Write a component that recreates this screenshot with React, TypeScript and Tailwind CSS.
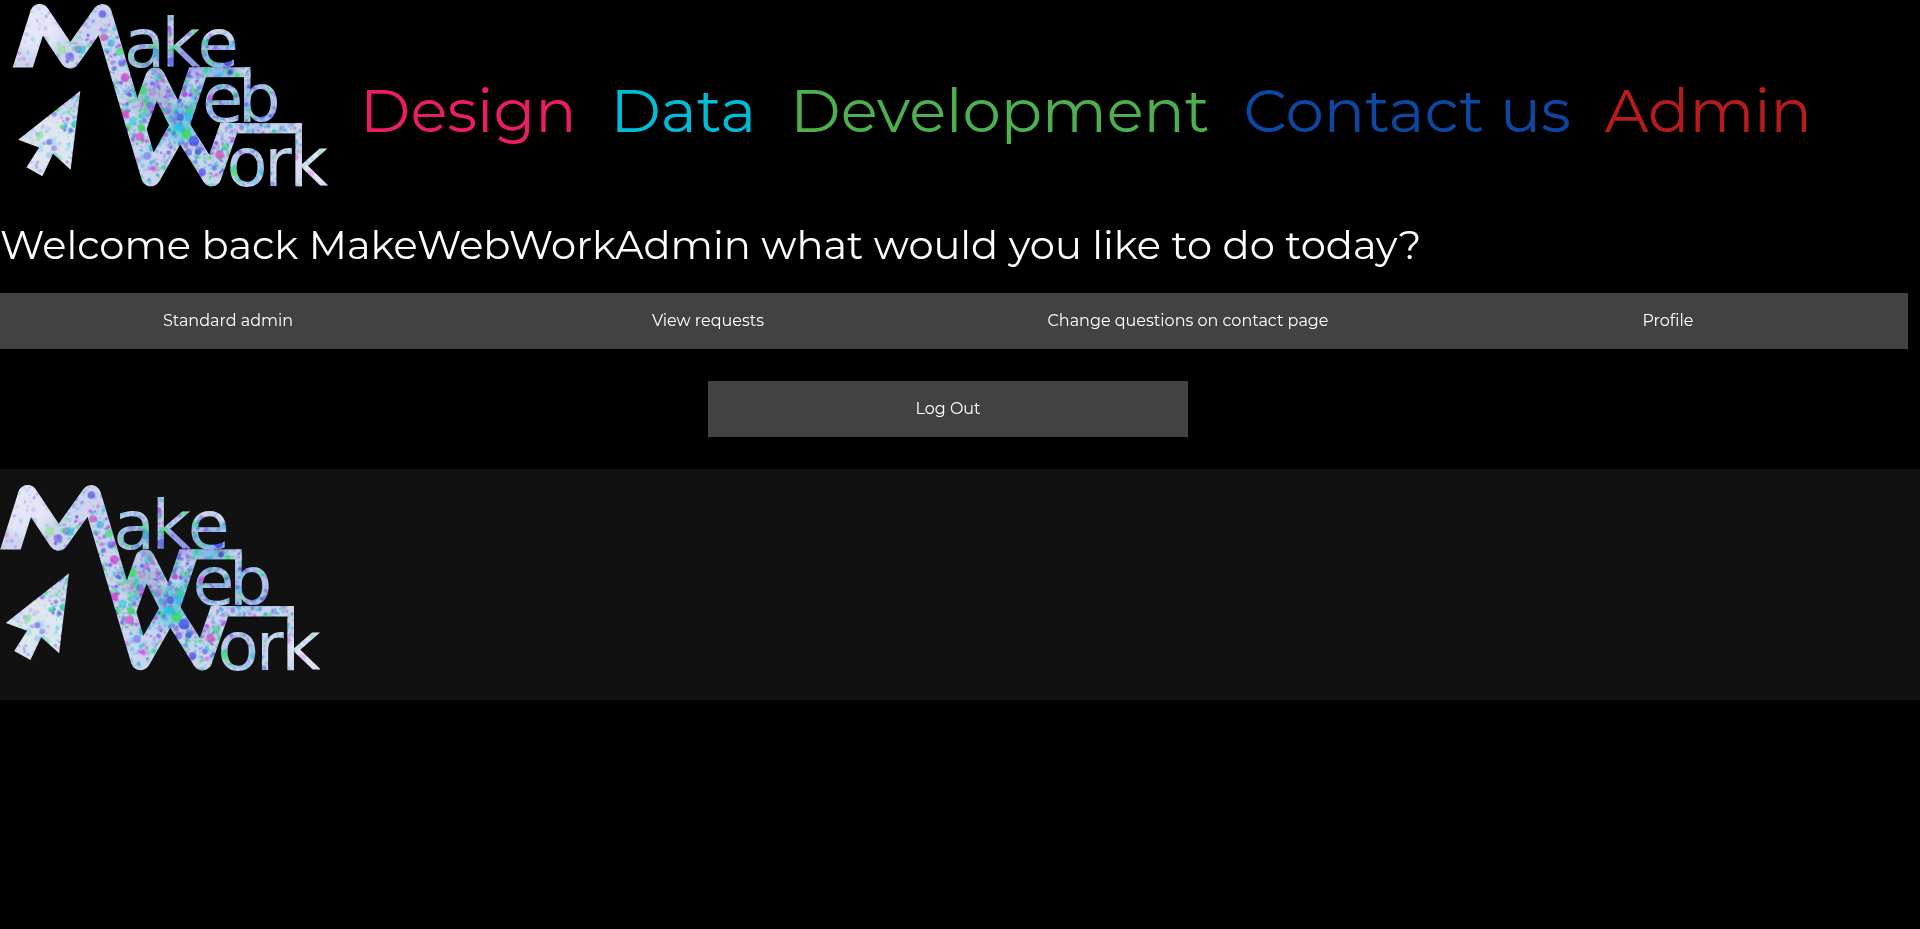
import { useId } from "react";

type Dot = { x: number; y: number; r: number; color: string; opacity: number };

const dotColors = ["#4646f0", "#32e664", "#dc3cdc", "#28c8e6", "#5a64e6", "#8c50dc", "#28b4e6", "#3cdc78"];

function makeDots(): Dot[] {
  let seed = 20177;
  const next = () => {
    seed = (seed * 16807) % 2147483647;
    return seed / 2147483647;
  };
  const dots: Dot[] = [];
  for (let i = 0; i < 9000; i++) {
    const x = 30 + next() * 960;
    const y = 10 + next() * 555;
    const distance = Math.hypot((x - 550) / 480, (y - 320) / 420);
    const keep = next();
    const size = next();
    const color = dotColors[Math.floor(next() * dotColors.length)];
    const strength = next();
    if (keep < Math.max(0.18, 1.05 - distance * 0.8)) {
      const fade = distance > 0.8 ? 0.5 : 1;
      dots.push({
        x: Math.round(x),
        y: Math.round(y),
        r: size > 0.97 ? 11 : Math.round(2 + size * size * 6),
        color,
        opacity: Math.round((0.15 + strength * 0.6) * fade * 100) / 100,
      });
    }
  }
  return dots;
}

const dots = makeDots();

const patches = [
  { x: 545, y: 370, r: 60, color: "#3cc8d2", opacity: 0.6 },
  { x: 460, y: 300, r: 60, color: "#a0aad2", opacity: 0.6 },
  { x: 660, y: 190, r: 60, color: "#50a0dc", opacity: 0.5 },
  { x: 560, y: 180, r: 45, color: "#5a5ae6", opacity: 0.5 },
  { x: 430, y: 160, r: 60, color: "#82aad7", opacity: 0.5 },
  { x: 640, y: 300, r: 60, color: "#8ca0dc", opacity: 0.5 },
  { x: 770, y: 310, r: 70, color: "#8cafe6", opacity: 0.5 },
  { x: 740, y: 500, r: 60, color: "#96b9e6", opacity: 0.4 },
  { x: 110, y: 80, r: 80, color: "#ebebfa", opacity: 0.8 },
  { x: 170, y: 440, r: 110, color: "#e1ebf0", opacity: 0.8 },
  { x: 950, y: 500, r: 60, color: "#ebebfa", opacity: 0.7 },
];

const spots = [
  { x: 308, y: 42, r: 11, color: "#5a50e6" },
  { x: 313, y: 112, r: 11, color: "#d250c8" },
  { x: 334, y: 130, r: 11, color: "#46b4e6" },
  { x: 361, y: 155, r: 12, color: "#46dc78" },
  { x: 376, y: 233, r: 13, color: "#c83cc8" },
  { x: 185, y: 149, r: 12, color: "#96e696" },
  { x: 210, y: 170, r: 13, color: "#7864e6" },
  { x: 377, y: 343, r: 11, color: "#d23ccd" },
  { x: 421, y: 411, r: 13, color: "#dc46d2" },
  { x: 425, y: 385, r: 11, color: "#32dc50" },
  { x: 430, y: 272, r: 13, color: "#3cdc64" },
  { x: 400, y: 364, r: 12, color: "#46c8e6" },
  { x: 443, y: 468, r: 12, color: "#6e82eb" },
  { x: 570, y: 330, r: 12, color: "#32c896" },
  { x: 542, y: 352, r: 11, color: "#5050dc" },
  { x: 540, y: 384, r: 13, color: "#1ec8e6" },
  { x: 560, y: 402, r: 15, color: "#32dc5a" },
  { x: 583, y: 424, r: 16, color: "#4646f0" },
  { x: 595, y: 458, r: 9, color: "#2864c8" },
  { x: 608, y: 517, r: 11, color: "#5a46eb" },
  { x: 660, y: 465, r: 13, color: "#c850be" },
  { x: 163, y: 343, r: 8, color: "#7882eb" },
  { x: 122, y: 406, r: 9, color: "#82eb82" },
  { x: 148, y: 427, r: 9, color: "#786ee6" },
  { x: 163, y: 445, r: 9, color: "#8c8ceb" },
  { x: 525, y: 145, r: 10, color: "#46dc6e" },
  { x: 516, y: 185, r: 14, color: "#5064e6" },
  { x: 468, y: 160, r: 14, color: "#46a0dc" },
  { x: 616, y: 128, r: 10, color: "#28d2a0" },
  { x: 685, y: 186, r: 13, color: "#3c3ce6" },
  { x: 638, y: 292, r: 11, color: "#d25adc" },
  { x: 692, y: 217, r: 8, color: "#2846b4" },
  { x: 705, y: 515, r: 14, color: "#46dc78" },
];

function Logo({ className }: { className: string }) {
  const id = useId();
  const shape = `${id}-shape`;
  const haze = `${id}-haze`;
  const upper = `${id}-upper`;
  const lower = `${id}-lower`;
  const bar = `${id}-bar`;
  return (
    <svg viewBox="38 12 947 550" role="img" aria-label="Make Web Work" className={className}>
      <defs>
        <filter id={haze} x="-50%" y="-50%" width="200%" height="200%">
          <feGaussianBlur stdDeviation="14" />
        </filter>
        <clipPath id={upper}>
          <rect x="0" y="0" width="1000" height="203" />
        </clipPath>
        <clipPath id={lower}>
          <rect x="0" y="202" width="1000" height="370" />
        </clipPath>
        <clipPath id={bar}>
          <rect x="0" y="370" width="1000" height="200" />
        </clipPath>
        <mask id={shape} maskUnits="userSpaceOnUse" x="30" y="0" width="970" height="580">
          <g fill="none" stroke="white" strokeWidth="58" strokeLinejoin="round">
            <polyline points="54,250 120,41 122,43" clipPath={`url(#${upper})`} />
            <polyline points="120,41 211,177 308,41 454,531 541,378 637,531" strokeLinecap="round" />
            <polyline points="410,390 467,231 541,376 602,195" clipPath={`url(#${lower})`} />
            <polyline points="637,531 700,350" strokeLinecap="round" clipPath={`url(#${bar})`} />
          </g>
          <g fill="white">
            <rect x="590" y="202" width="163" height="30" />
            <rect x="735" y="202" width="18" height="164" />
            <rect x="680" y="370" width="228" height="31" />
            <rect x="889" y="370" width="19" height="190" />
            <polygon points="242,273 213,510 160,462 128,530 80,503 118,443 55,420" />
          </g>
          <g fill="white" fontFamily="'DejaVu Sans', sans-serif" fontSize="202">
            <text x="373 486 594" y="200">ake</text>
            <text x="608 716" y="366">eb</text>
            <text x="681 795 871" y="560">ork</text>
          </g>
        </mask>
      </defs>
      <g mask={`url(#${shape})`}>
        <rect x="30" y="0" width="970" height="580" fill="#cdd5ee" />
        <g filter={`url(#${haze})`}>
          {patches.map((p, i) => (
            <circle key={i} cx={p.x} cy={p.y} r={p.r} fill={p.color} opacity={p.opacity} />
          ))}
        </g>
        {dots.map((d, i) => (
          <circle key={i} cx={d.x} cy={d.y} r={d.r} fill={d.color} opacity={d.opacity} />
        ))}
        {spots.map((s, i) => (
          <circle key={i} cx={s.x} cy={s.y} r={s.r} fill={s.color} opacity="0.75" />
        ))}
      </g>
    </svg>
  );
}

const navLinks = [
  { label: "Design", className: "text-[#e91e63]" },
  { label: "Data", className: "text-[#00bcd4]" },
  { label: "Development", className: "text-[#4caf50]" },
  { label: "Contact us", className: "text-[#0d47a1]" },
  { label: "Admin", className: "text-[#b71c1c]" },
];

const actions = ["Standard admin", "View requests", "Change questions on contact page", "Profile"];

export default function App() {
  return (
    <div className="min-h-screen overflow-x-hidden bg-black font-['Montserrat','Inter',sans-serif] text-white">
      <header className="flex items-center gap-8 px-3 pt-1 pb-6">
        <a href="#home" className="shrink-0">
          <Logo className="block h-[183px] w-[316px]" />
        </a>
        <nav className="flex gap-[34px] pt-7 text-[61px] leading-[72px] font-normal whitespace-nowrap">
          {navLinks.map((link) => (
            <a key={link.label} href="#" className={link.className}>
              {link.label}
            </a>
          ))}
        </nav>
      </header>
      <main>
        <h1 className="pt-2 text-[40px] leading-[52px] font-normal">
          Welcome back MakeWebWorkAdmin what would you like to do today?
        </h1>
        <div className="mt-[22px] mr-3 -ml-3 grid grid-cols-4">
          {actions.map((label) => (
            <button key={label} type="button" className="h-14 bg-[#424242] text-base">
              {label}
            </button>
          ))}
        </div>
        <div className="mr-3 -ml-3 flex justify-center py-8">
          <button type="button" className="h-14 w-1/4 bg-[#424242] text-base">
            Log Out
          </button>
        </div>
      </main>
      <footer className="bg-[#111111] pt-4 pb-[29px]">
        <Logo className="block h-[186px] w-80" />
      </footer>
    </div>
  );
}
